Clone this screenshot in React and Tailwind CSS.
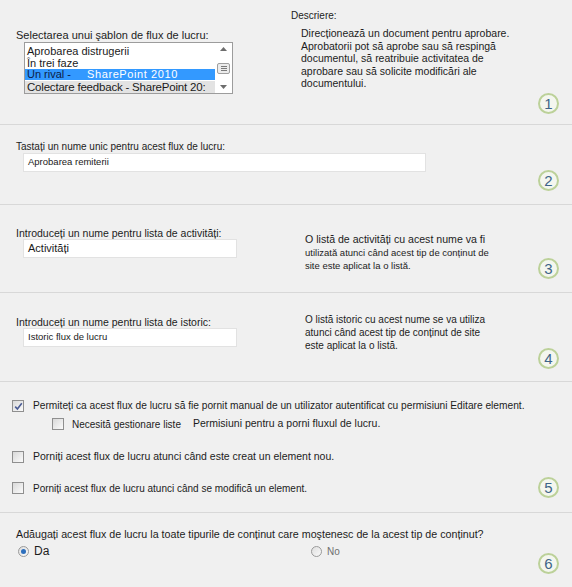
import React from 'react'

// Workflow settings form: template picker, names for task/history lists,
// start options and content type propagation, each step tagged with a numbered badge.

function StepBadge({ n }) {
  return (
    <div className="w-[21px] h-[21px] rounded-full border-2 border-[#bcd199] bg-[#f4f6ef] flex items-center justify-center text-[15px] leading-none text-[#3e6488]">
      {n}
    </div>
  )
}

function CheckBox({ checked }) {
  return (
    <span className="w-[12px] h-[12px] shrink-0 border border-[#8f8f8f] bg-linear-to-br from-[#d9d9d9] to-[#fbfbfb] flex items-center justify-center">
      {checked && (
        <svg width="9" height="9" viewBox="0 0 9 9">
          <path d="M1.2 4.6 L3.4 7 L7.8 1.2" fill="none" stroke="#4b5c94" strokeWidth="1.6" />
        </svg>
      )}
    </span>
  )
}

function Radio({ checked }) {
  return (
    <span className="w-[11px] h-[11px] shrink-0 rounded-full border border-[#9a9a9a] bg-linear-to-br from-[#dedede] to-[#fafafa] flex items-center justify-center">
      {checked && <span className="w-[5px] h-[5px] rounded-full bg-[#2d6fbd]" />}
    </span>
  )
}

function TemplateList() {
  return (
    <div className="ml-2 w-[209px] h-[52px] border border-[#9c9c9c] bg-white flex overflow-hidden">
      <div className="flex-1 pt-[3px] text-[11px] leading-[11.5px] text-[#1a1a1a] whitespace-nowrap overflow-hidden">
        <div className="pl-[2px]">Aprobarea distrugerii</div>
        <div className="pl-[2px]">În trei faze</div>
        <div className="pl-[2px] bg-[#3399ff] h-[11px] flex items-center">
          <span className="text-[#0c1d47]">Un rival -</span>
          <span className="ml-[16px] text-white tracking-[0.6px]">SharePoint 2010</span>
        </div>
        <div className="pl-[2px] mt-[1px] bg-[#e3e3e3] text-[11.5px] leading-[13px] tracking-[-0.2px]">Colectare feedback - SharePoint 20:</div>
      </div>
      <div className="w-[17px] flex flex-col items-center justify-between py-[4px] bg-white">
        <svg width="7" height="4" viewBox="0 0 7 4"><path d="M0 4 L3.5 0 L7 4 Z" fill="#6d6d6d" /></svg>
        <div className="w-[13px] h-[11px] border border-[#9f9f9f] rounded-[2px] bg-[#ececec] flex flex-col items-center justify-center gap-[1px]">
          <span className="w-[6px] h-px bg-[#7a7a7a]" />
          <span className="w-[6px] h-px bg-[#7a7a7a]" />
          <span className="w-[6px] h-px bg-[#7a7a7a]" />
        </div>
        <svg width="7" height="4" viewBox="0 0 7 4"><path d="M0 0 L3.5 4 L7 0 Z" fill="#6d6d6d" /></svg>
      </div>
    </div>
  )
}

function TextBox({ value, width, textSize = 'text-[10px]' }) {
  return (
    <div className={`ml-[7px] h-[19px] bg-white border border-[#e2e2e2] flex items-center pl-[4px] text-[#1a1a1a] ${width} ${textSize}`}>
      {value}
    </div>
  )
}

export default function App() {
  return (
    <div className="w-[572px] h-[587px] bg-[#f0f0f0] text-[#1c1c1c] font-['Liberation_Sans',Arial,sans-serif] overflow-hidden">
      {/* 1: template + description */}
      <section className="flex h-[125px] border-b border-[#d8d8d8]">
        <div className="w-[275px] pl-4 pt-[29px]">
          <p className="text-[11px] leading-[13px]">Selectarea unui şablon de flux de lucru:</p>
          <TemplateList />
        </div>
        <div className="flex-1 pt-[10px] pl-4">
          <p className="text-[10px] leading-[12px]">Descriere:</p>
          <p className="pl-[10px] mt-[5px] text-[10.5px] leading-[12.5px]">
            <span className="block">Direcționează un document pentru aprobare.</span>
            <span className="block">Aprobatorii pot să aprobe sau să respingă</span>
            <span className="block">documentul, să reatribuie activitatea de</span>
            <span className="block">aprobare sau să solicite modificări ale</span>
            <span className="block">documentului.</span>
          </p>
        </div>
        <div className="self-end pb-[10px] pr-[13px]">
          <StepBadge n={1} />
        </div>
      </section>

      {/* 2: workflow name */}
      <section className="flex h-[80px] border-b border-[#d8d8d8]">
        <div className="flex-1 pl-4 pt-[16px]">
          <p className="text-[10px] leading-[12px]">Tastați un nume unic pentru acest flux de lucru:</p>
          <TextBox value="Aprobarea remiterii" width="w-[403px]" textSize="text-[9.5px]" />
        </div>
        <div className="self-end pb-[13px] pr-[13px]">
          <StepBadge n={2} />
        </div>
      </section>

      {/* 3: task list */}
      <section className="flex h-[88px] border-b border-[#d8d8d8]">
        <div className="w-[289px] pl-4 pt-[22px]">
          <p className="text-[10.5px] leading-[12px]">Introduceți un nume pentru lista de activități:</p>
          <TextBox value="Activități" width="w-[214px]" textSize="text-[11px]" />
        </div>
        <div className="flex-1 pl-4 pt-[28px]">
          <p className="text-[10.6px] leading-[13px]">O listă de activități cu acest nume va fi</p>
          <p className="text-[9.5px] leading-[13px]">utilizată atunci când acest tip de conținut de</p>
          <p className="text-[9.5px] leading-[13px]">site este aplicat la o listă.</p>
        </div>
        <div className="self-end pb-[13px] pr-[13px]">
          <StepBadge n={3} />
        </div>
      </section>

      {/* 4: history list */}
      <section className="flex h-[89px] border-b border-[#d8d8d8]">
        <div className="w-[289px] pl-4 pt-[23px]">
          <p className="text-[10.5px] leading-[12px]">Introduceți un nume pentru lista de istoric:</p>
          <TextBox value="Istoric flux de lucru" width="w-[214px]" textSize="text-[9.5px]" />
        </div>
        <div className="flex-1 pl-4 pt-[20px] text-[10px] leading-[13px]">
          <p>O listă istoric cu acest nume se va utiliza</p>
          <p>atunci când acest tip de conținut de site</p>
          <p>este aplicat la o listă.</p>
        </div>
        <div className="self-end pb-[12px] pr-[13px]">
          <StepBadge n={4} />
        </div>
      </section>

      {/* 5: start options */}
      <section className="flex h-[131px] border-b border-[#d8d8d8]">
        <div className="flex-1 pl-[12px] pt-[18px] text-[10px]">
          <label className="flex items-center gap-[9px] h-[12px]">
            <CheckBox checked />
            <span className="text-[10.2px]">Permiteți ca acest flux de lucru să fie pornit manual de un utilizator autentificat cu permisiuni Editare element.</span>
          </label>
          <label className="flex items-center gap-[8px] h-[12px] mt-[6px] ml-[40px]">
            <CheckBox />
            <span>Necesită gestionare liste</span>
            <span className="ml-[4px] text-[10.5px]">Permisiuni pentru a porni fluxul de lucru.</span>
          </label>
          <label className="flex items-center gap-[9px] h-[12px] mt-[21px]">
            <CheckBox />
            <span className="text-[10.5px]">Porniți acest flux de lucru atunci când este creat un element nou.</span>
          </label>
          <label className="flex items-center gap-[9px] h-[12px] mt-[19px]">
            <CheckBox />
            <span>Porniți acest flux de lucru atunci când se modifică un element.</span>
          </label>
        </div>
        <div className="self-end pb-[14px] pr-[13px]">
          <StepBadge n={5} />
        </div>
      </section>

      {/* 6: content type propagation */}
      <section className="flex h-[74px]">
        <div className="flex-1 pl-4 pt-[15px]">
          <p className="text-[10.7px] leading-[12px]">Adăugați acest flux de lucru la toate tipurile de conținut care moştenesc de la acest tip de conținut?</p>
          <div className="flex items-center mt-[4px] h-[14px]">
            <label className="flex items-center gap-[5px] ml-[2px] w-[293px]">
              <Radio checked />
              <span className="text-[12px]">Da</span>
            </label>
            <label className="flex items-center gap-[5px]">
              <Radio />
              <span className="text-[10px] text-[#6f6f6f]">No</span>
            </label>
          </div>
        </div>
        <div className="self-end pb-[13px] pr-[13px]">
          <StepBadge n={6} />
        </div>
      </section>
    </div>
  )
}
